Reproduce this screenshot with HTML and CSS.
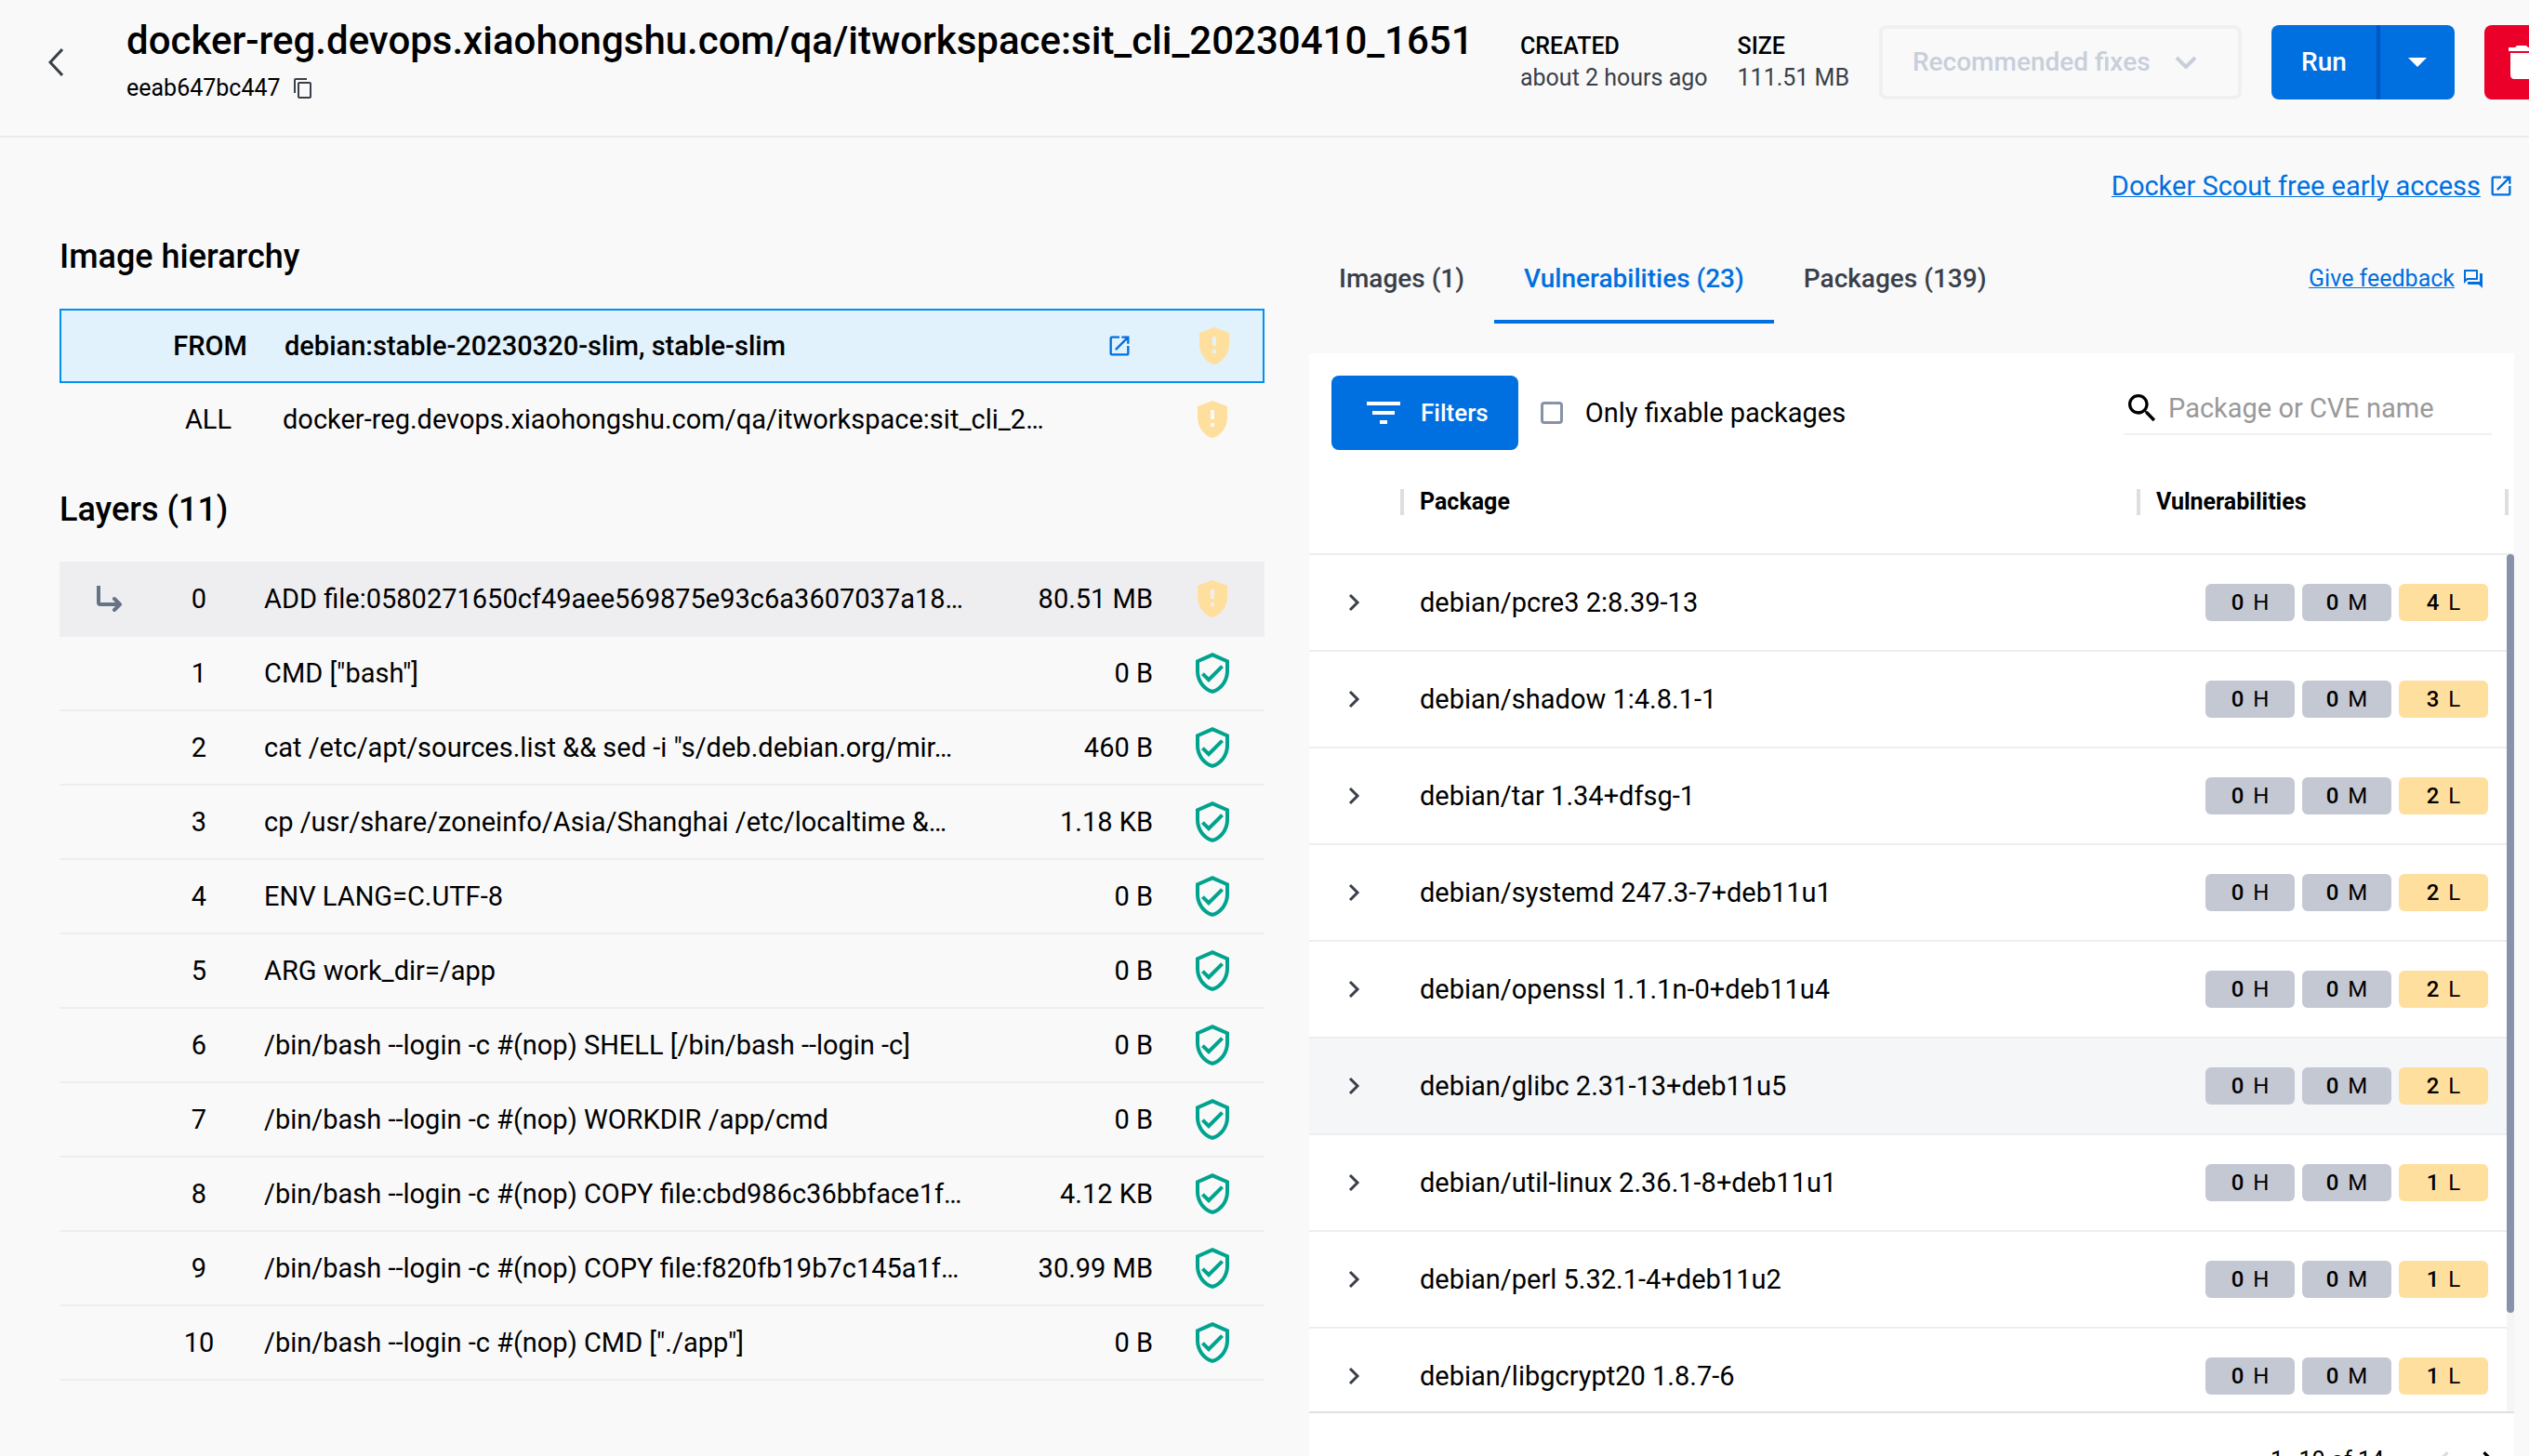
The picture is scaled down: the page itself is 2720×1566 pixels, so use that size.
FILE: index.html
```html
<!DOCTYPE html>
<html lang="en">
<head>
    <meta charset="utf-8">
    <title>Image details</title>
    <link rel="stylesheet" href="styles.css">
</head>
<body>

    <!-- shared icons -->
    <svg class="sprite" aria-hidden="true">
        <symbol id="warn" viewBox="0 0 24 24"><path d="M12 2 4 5v6.09c0 5.05 3.41 9.76 8 10.91 4.59-1.15 8-5.86 8-10.91V5l-8-3zm1 14h-2v-2h2v2zm0-4h-2V7h2v5z"/></symbol>
        <symbol id="ok" viewBox="0 0 24 24"><path d="M12 1 3 5v6c0 5.55 3.84 10.74 9 12 5.16-1.26 9-6.45 9-12V5l-9-4zm7 10c0 4.52-2.98 8.69-7 9.93-4.02-1.24-7-5.41-7-9.93V6.3l7-3.11 7 3.11V11zm-11.59.59L6 13l4 4 8-8-1.41-1.42L10 14.17z"/></symbol>
        <symbol id="open" viewBox="0 0 24 24"><path d="M19 19H5V5h7V3H5a2 2 0 0 0-2 2v14a2 2 0 0 0 2 2h14c1.1 0 2-.9 2-2v-7h-2v7zM14 3v2h3.59l-9.83 9.83 1.41 1.41L19 6.41V10h2V3h-7z"/></symbol>
        <symbol id="next" viewBox="0 0 24 24"><path d="M8 4l8 8-8 8" fill="none" stroke="currentColor" stroke-width="3"/></symbol>
    </svg>

    <header class="header">
        <button class="back" aria-label="Back">
            <svg viewBox="0 0 16 30"><path d="M15 1 2 15l13 14" fill="none" stroke="currentColor" stroke-width="3"/></svg>
        </button>
        <div class="name">
            <h1>docker-reg.devops.xiaohongshu.com/qa/itworkspace:sit_cli_20230410_1651</h1>
            <div class="hash">
                <span>eeab647bc447</span>
                <button class="copy" aria-label="Copy">
                    <svg viewBox="0 0 24 24"><path d="M16 1H4c-1.100 0-2 .9-2 2v14h2V3h12V1zm3 4H8c-1.100 0-2 .9-2 2v14c0 1.100.9 2 2 2h11c1.100 0 2-.9 2-2V7c0-1.100-.9-2-2-2zm0 16H8V7h11v14z"/></svg>
                </button>
            </div>
        </div>
        <dl class="info">
            <dt>CREATED</dt>
            <dd>about 2 hours ago</dd>
        </dl>
        <dl class="info">
            <dt>SIZE</dt>
            <dd>111.51 MB</dd>
        </dl>
        <button class="fixes" disabled>
            Recommended fixes
            <svg viewBox="0 0 24 14"><path d="M2 2l10 10L22 2" fill="none" stroke="currentColor" stroke-width="4"/></svg>
        </button>
        <div class="run-group">
            <button class="run">Run</button>
            <button class="run-more" aria-label="More run options">
                <svg viewBox="0 0 20 10"><path d="M0 0h20L10 10z"/></svg>
            </button>
        </div>
        <button class="delete" aria-label="Delete">
            <svg viewBox="0 0 24 24"><path d="M6 19c0 1.100.9 2 2 2h8c1.100 0 2-.9 2-2V7H6v12zM19 4h-3.500l-1-1h-5l-1 1H5v2h14V4z"/></svg>
        </button>
    </header>

    <main class="content">
        <a class="scout" href="#">
            <span>Docker Scout free early access</span>
            <svg><use href="#open"/></svg>
        </a>

        <section class="left">
            <h2>Image hierarchy</h2>
            <ul class="hierarchy">
                <li class="selected">
                    <span class="kind">FROM</span>
                    <span class="ref">debian:stable-20230320-slim, stable-slim</span>
                    <a class="open" href="#" aria-label="Open"><svg><use href="#open"/></svg></a>
                    <svg class="shield warn"><use href="#warn"/></svg>
                </li>
                <li>
                    <span class="kind">ALL</span>
                    <span class="ref">docker-reg.devops.xiaohongshu.com/qa/itworkspace:sit_cli_2…</span>
                    <svg class="shield warn"><use href="#warn"/></svg>
                </li>
            </ul>

            <h2>Layers (11)</h2>
            <table class="layers">
                <tr class="current">
                    <td class="arrow"><svg viewBox="0 0 28 28"><path d="M2 0v18q0 2 2 2h21" fill="none" stroke="currentColor" stroke-width="4"/><path d="M19 14l6 6-6 6" fill="none" stroke="currentColor" stroke-width="4" stroke-linecap="round" stroke-linejoin="round"/></svg></td>
                    <td class="num">0</td>
                    <td class="cmd">ADD file:0580271650cf49aee569875e93c6a3607037a18…</td>
                    <td class="size">80.51 MB</td>
                    <td class="state"><svg class="shield warn"><use href="#warn"/></svg></td>
                </tr>
                <tr>
                    <td></td>
                    <td class="num">1</td>
                    <td class="cmd">CMD ["bash"]</td>
                    <td class="size">0 B</td>
                    <td class="state"><svg class="shield ok"><use href="#ok"/></svg></td>
                </tr>
                <tr>
                    <td></td>
                    <td class="num">2</td>
                    <td class="cmd">cat /etc/apt/sources.list &amp;&amp; sed -i "s/deb.debian.org/mir…</td>
                    <td class="size">460 B</td>
                    <td class="state"><svg class="shield ok"><use href="#ok"/></svg></td>
                </tr>
                <tr>
                    <td></td>
                    <td class="num">3</td>
                    <td class="cmd">cp /usr/share/zoneinfo/Asia/Shanghai /etc/localtime &amp;…</td>
                    <td class="size">1.18 KB</td>
                    <td class="state"><svg class="shield ok"><use href="#ok"/></svg></td>
                </tr>
                <tr>
                    <td></td>
                    <td class="num">4</td>
                    <td class="cmd">ENV LANG=C.UTF-8</td>
                    <td class="size">0 B</td>
                    <td class="state"><svg class="shield ok"><use href="#ok"/></svg></td>
                </tr>
                <tr>
                    <td></td>
                    <td class="num">5</td>
                    <td class="cmd">ARG work_dir=/app</td>
                    <td class="size">0 B</td>
                    <td class="state"><svg class="shield ok"><use href="#ok"/></svg></td>
                </tr>
                <tr>
                    <td></td>
                    <td class="num">6</td>
                    <td class="cmd">/bin/bash --login -c #(nop) SHELL [/bin/bash --login -c]</td>
                    <td class="size">0 B</td>
                    <td class="state"><svg class="shield ok"><use href="#ok"/></svg></td>
                </tr>
                <tr>
                    <td></td>
                    <td class="num">7</td>
                    <td class="cmd">/bin/bash --login -c #(nop) WORKDIR /app/cmd</td>
                    <td class="size">0 B</td>
                    <td class="state"><svg class="shield ok"><use href="#ok"/></svg></td>
                </tr>
                <tr>
                    <td></td>
                    <td class="num">8</td>
                    <td class="cmd">/bin/bash --login -c #(nop) COPY file:cbd986c36bbface1f…</td>
                    <td class="size">4.12 KB</td>
                    <td class="state"><svg class="shield ok"><use href="#ok"/></svg></td>
                </tr>
                <tr>
                    <td></td>
                    <td class="num">9</td>
                    <td class="cmd">/bin/bash --login -c #(nop) COPY file:f820fb19b7c145a1f…</td>
                    <td class="size">30.99 MB</td>
                    <td class="state"><svg class="shield ok"><use href="#ok"/></svg></td>
                </tr>
                <tr>
                    <td></td>
                    <td class="num">10</td>
                    <td class="cmd">/bin/bash --login -c #(nop) CMD ["./app"]</td>
                    <td class="size">0 B</td>
                    <td class="state"><svg class="shield ok"><use href="#ok"/></svg></td>
                </tr>
            </table>
        </section>

        <section class="right">
            <nav class="tabs">
                <button>Images (1)</button>
                <button class="active">Vulnerabilities (23)</button>
                <button>Packages (139)</button>
                <a class="feedback" href="#">
                    <span>Give feedback</span>
                    <svg viewBox="0 0 24 24"><path d="M15 4v7H5.170L4 12.170V4h11m1-2H3c-.55 0-1 .45-1 1v14l4-4h10c.55 0 1-.45 1-1V3c0-.55-.45-1-1-1zm5 4h-2v9H6v2c0 .55.45 1 1 1h11l4 4V7c0-.55-.45-1-1-1z"/></svg>
                </a>
            </nav>

            <div class="panel">
                <div class="toolbar">
                    <button class="filters">
                        <svg viewBox="0 0 24 24"><path d="M10 18h4v-2h-4v2zM3 6v2h18V6H3zm3 7h12v-2H6v2z"/></svg>
                        Filters
                    </button>
                    <input type="checkbox" id="fixable">
                    <label for="fixable">Only fixable packages</label>
                    <div class="search">
                        <svg viewBox="0 0 24 24"><path d="M15.500 14h-.79l-.28-.27C15.410 12.590 16 11.110 16 9.500 16 5.910 13.090 3 9.500 3S3 5.910 3 9.500 5.910 16 9.500 16c1.610 0 3.090-.59 4.230-1.570l.27.28v.79l5 4.990L20.490 19l-4.990-5zm-6 0C7.010 14 5 11.990 5 9.500S7.010 5 9.500 5 14 7.010 14 9.500 11.990 14 9.500 14z"/></svg>
                        <input type="text" placeholder="Package or CVE name" aria-label="Package or CVE name">
                    </div>
                </div>

                <div class="grid">
                    <table class="packages">
                        <thead>
                            <tr>
                                <th class="expand"></th>
                                <th><div class="head">Package</div></th>
                                <th class="vulns"><div class="head last">Vulnerabilities</div></th>
                            </tr>
                        </thead>
                        <tbody id="rows"></tbody>
                    </table>
                    <div class="scrollbar"><div class="thumb"></div></div>
                </div>

                <div class="pager">
                    <span>1–10 of 14</span>
                    <button aria-label="Previous page" disabled><svg viewBox="0 0 24 24"><path d="M15.410 7.410 14 6l-6 6 6 6 1.410-1.410L10.830 12z"/></svg></button>
                    <button aria-label="Next page"><svg viewBox="0 0 24 24"><path d="M10 6 8.590 7.410 13.170 12l-4.580 4.590L10 18l6-6z"/></svg></button>
                </div>
            </div>
        </section>
    </main>

    <script>
        const packages = [
            ['debian/pcre3 2:8.39-13', 4],
            ['debian/shadow 1:4.8.1-1', 3],
            ['debian/tar 1.34+dfsg-1', 2],
            ['debian/systemd 247.3-7+deb11u1', 2],
            ['debian/openssl 1.1.1n-0+deb11u4', 2],
            ['debian/glibc 2.31-13+deb11u5', 2],
            ['debian/util-linux 2.36.1-8+deb11u1', 1],
            ['debian/perl 5.32.1-4+deb11u2', 1],
            ['debian/libgcrypt20 1.8.7-6', 1]
        ];

        document.getElementById('rows').innerHTML = packages.map(([name, low], i) => `
            <tr class="${i === 5 ? 'hover' : ''}">
                <td class="expand"><button aria-label="Expand"><svg><use href="#next"/></svg></button></td>
                <td class="package">${name}</td>
                <td class="vulns">
                    <div class="pills">
                        <span class="pill"><b>0</b> H</span>
                        <span class="pill"><b>0</b> M</span>
                        <span class="pill low"><b>${low}</b> L</span>
                    </div>
                </td>
            </tr>`).join('');
    </script>
</body>
</html>
```
FILE: styles.css
```css
* {
    box-sizing: border-box;
}

body {
    margin: 0;
    height: 100vh;
    overflow: hidden;
    background: #f9f9fa;
    color: #000;
    font-family: Roboto, "Liberation Sans", sans-serif;
    font-size: 29px;
    line-height: 40px;
}

button,
input {
    font: inherit;
    color: inherit;
    background: none;
    border: 0;
    padding: 0;
    margin: 0;
}

button {
    cursor: pointer;
}

svg {
    display: block;
    flex: none;
    fill: currentColor;
}

a {
    color: #006fe0;
    text-decoration-thickness: 1px;
}

h1,
h2,
dl,
dd,
ul {
    margin: 0;
    padding: 0;
}

table {
    width: 100%;
    border-collapse: collapse;
    table-layout: fixed;
}

td,
th {
    padding: 0;
}

.sprite {
    display: none;
}

/* header */

.header {
    display: flex;
    align-items: center;
    gap: 32px;
    width: calc(100% + 32px);
    height: 148px;
    padding: 0 0 12px 52px;
    border-bottom: 2px solid #ececee;
}

.back {
    width: 52px;
    color: #393f49;
}

.back svg {
    width: 16px;
    height: 30px;
}

.name {
    flex: 1;
    padding-bottom: 4px;
}

h1 {
    font-size: 42px;
    line-height: 52px;
    font-weight: 500;
    white-space: nowrap;
}

.hash {
    display: flex;
    align-items: center;
    gap: 12px;
    margin-top: 8px;
    font-size: 25px;
    line-height: 34px;
}

.copy {
    color: #393f49;
}

.copy svg {
    width: 24px;
    height: 24px;
}

.info {
    font-size: 25px;
    line-height: 34px;
    white-space: nowrap;
}

.info dt {
    font-weight: 500;
}

.info dd {
    color: #393f49;
}

.fixes {
    display: flex;
    align-items: center;
    justify-content: space-between;
    width: 390px;
    height: 80px;
    padding: 0 44px 0 32px;
    border: 4px solid #f0f0f2;
    border-radius: 8px;
    color: #c8cfda;
    font-size: 28px;
    font-weight: 500;
    white-space: nowrap;
}

.fixes svg {
    width: 24px;
    height: 14px;
}

.run-group {
    display: flex;
    height: 80px;
    border-radius: 8px;
    overflow: hidden;
    background: #006fe0;
    color: #fff;
}

.run {
    width: 117px;
    border-right: 4px solid #0057c2;
    font-size: 28px;
    font-weight: 500;
}

.run-more {
    display: flex;
    align-items: center;
    justify-content: center;
    width: 80px;
}

.run-more svg {
    width: 20px;
    height: 10px;
}

.delete {
    padding: 16px;
    border-radius: 8px;
    background: #ea0029;
    color: #fff;
}

.delete svg {
    width: 48px;
    height: 48px;
}

/* content */

.content {
    display: grid;
    grid-template-columns: 1fr 1fr;
    column-gap: 48px;
    padding: 32px 16px 0 64px;
}

.scout {
    grid-column: 1 / 3;
    justify-self: end;
    display: flex;
    align-items: center;
    gap: 8px;
}

.scout svg,
.open svg {
    width: 28px;
    height: 28px;
}

h2 {
    font-size: 36px;
    line-height: 48px;
    font-weight: 500;
}

.left {
    padding-top: 32px;
}

.hierarchy {
    margin: 32px 0 34px;
    list-style: none;
}

.hierarchy li {
    display: flex;
    align-items: center;
    height: 78px;
    padding: 0 32px 0 100px;
}

.hierarchy .selected {
    height: 80px;
    padding: 0 30px 0 102px;
    background: #e1f2fc;
    outline: 2px solid #0090f0;
    outline-offset: -2px;
    font-weight: 500;
}

.kind {
    width: 120px;
    text-align: center;
}

.ref {
    flex: 1;
    padding-left: 20px;
}

.open {
    margin-right: 64px;
}

.shield {
    width: 48px;
    height: 48px;
}

.warn {
    color: #ffdf9e;
}

.ok {
    color: #00a38d;
}

.layers {
    margin-top: 32px;
}

.layers td {
    height: 80px;
    border-bottom: 2px solid #eeeef0;
    white-space: nowrap;
}

.current {
    background: #eeeef1;
}

.layers td:first-child {
    width: 104px;
}

.arrow {
    padding-left: 40px;
    color: #677285;
}

.arrow svg {
    width: 28px;
    height: 28px;
}

.layers .num {
    width: 92px;
    text-align: center;
}

.layers .cmd {
    padding-left: 24px;
}

.layers .size {
    width: 180px;
    padding-right: 8px;
    text-align: right;
}

.layers .state {
    width: 112px;
    padding-left: 32px;
}

/* tabs */

.tabs {
    display: flex;
    height: 92px;
    margin: 36px 0 32px;
}

.tabs button {
    padding: 0 32px;
    border-bottom: 4px solid transparent;
    color: #393f49;
    font-size: 28px;
    font-weight: 500;
}

.tabs .active {
    border-color: #006fe0;
    color: #006fe0;
}

.feedback {
    display: flex;
    align-items: center;
    gap: 8px;
    margin: 0 32px 0 auto;
    padding-bottom: 4px;
    font-size: 25px;
}

.feedback svg {
    width: 24px;
    height: 24px;
}

/* vulnerabilities panel */

.panel {
    background: #fff;
}

.toolbar {
    display: flex;
    align-items: center;
    padding: 24px 24px 0;
}

.filters {
    display: flex;
    align-items: center;
    gap: 16px;
    height: 80px;
    padding: 0 32px;
    border-radius: 8px;
    background: #006fe0;
    color: #fff;
    font-size: 26px;
    font-weight: 500;
}

.filters svg {
    width: 48px;
    height: 48px;
}

#fixable {
    appearance: none;
    width: 24px;
    height: 24px;
    margin: 0 24px;
    border: 3px solid #8793a8;
    border-radius: 4px;
}

.search {
    display: flex;
    align-items: center;
    gap: 8px;
    width: 396px;
    height: 56px;
    margin: 0 0 8px auto;
    border-bottom: 2px solid #f0f0f2;
}

.search svg {
    width: 40px;
    height: 40px;
}

.search input {
    width: 100%;
    min-width: 0;
    outline: 0;
}

.search input::placeholder {
    color: #999;
}

.grid {
    position: relative;
    height: calc(100vh - 532px);
    overflow: hidden;
}

.packages th {
    height: 112px;
    border-bottom: 2px solid #eeeef0;
    font-size: 25px;
    line-height: 28px;
    font-weight: 700;
    text-align: left;
}

.packages td {
    height: 104px;
    border-bottom: 2px solid #eeeef0;
}

.packages .expand {
    width: 98px;
}

.packages .vulns {
    width: 406px;
}

.head {
    padding-left: 17px;
    border-left: 4px solid #dedede;
}

.last {
    margin-right: 6px;
    border-right: 4px solid #dedede;
}

.expand button {
    display: block;
    margin-left: 36px;
    color: #393f49;
}

.expand svg {
    width: 24px;
    height: 24px;
}

.packages .package {
    padding-left: 21px;
}

.hover {
    background: #f5f6f8;
}

.pills {
    display: flex;
    justify-content: flex-end;
    gap: 8px;
    padding-right: 28px;
}

.pill {
    width: 96px;
    border-radius: 6px;
    background: #c4c8d3;
    font-size: 24px;
    text-align: center;
}

.pill b {
    font-weight: 500;
    margin-right: 4px;
}

.low {
    background: #ffdf9e;
}

/* lies over the table, below its header */
.scrollbar {
    position: absolute;
    top: 112px;
    right: 0;
    bottom: 0;
    width: 8px;
    background: #f5f5f5;
}

.thumb {
    height: calc(100% - 106px);
    border-radius: 4px;
    background: #8793a8;
}

.pager {
    display: flex;
    align-items: center;
    justify-content: flex-end;
    gap: 8px;
    height: 104px;
    padding-right: 8px;
    border-top: 2px solid #e0e0e0;
    font-size: 25px;
}

.pager span {
    margin-right: 36px;
}

.pager svg {
    width: 40px;
    height: 40px;
}

.pager button:disabled {
    color: #ddd;
}
```
